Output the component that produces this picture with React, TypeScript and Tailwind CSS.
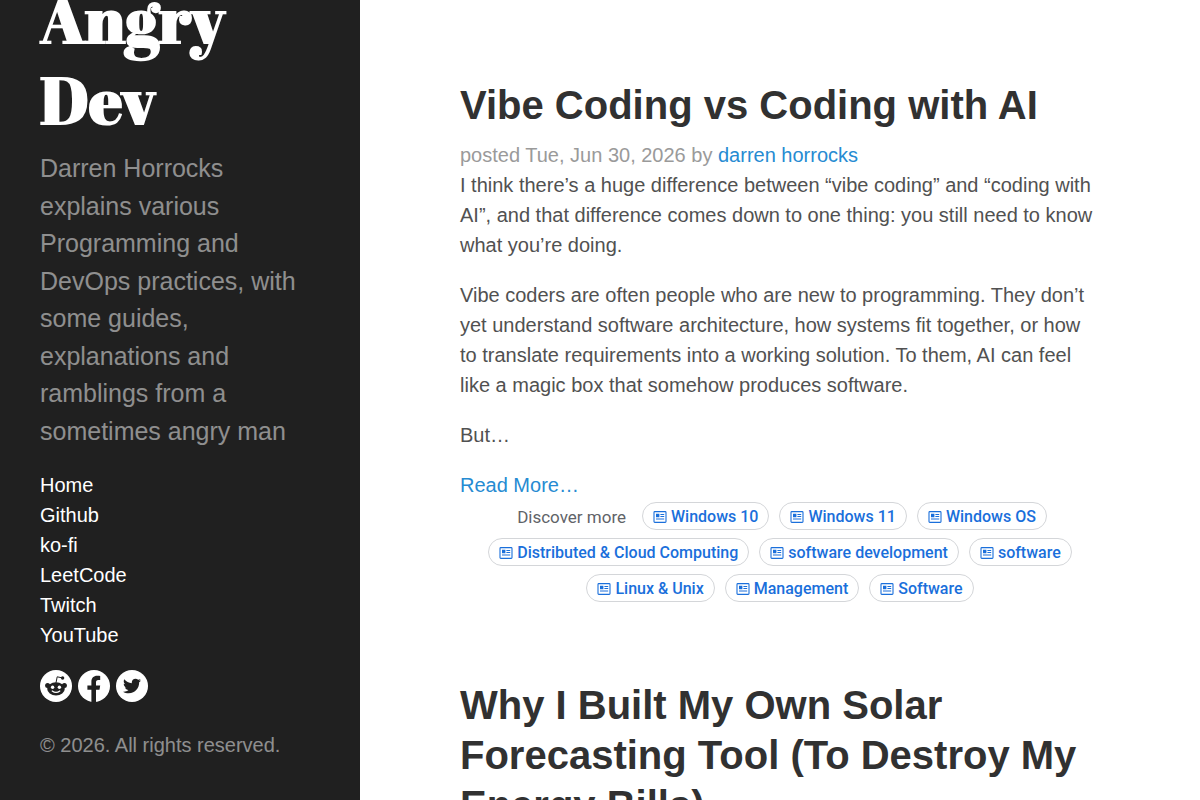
import { FaTwitter } from "react-icons/fa";

const links = ["Home", "Github", "ko-fi", "LeetCode", "Twitch", "YouTube"];

const topics = [
  "Windows 10",
  "Windows 11",
  "Windows OS",
  "Distributed & Cloud Computing",
  "software development",
  "software",
  "Linux & Unix",
  "Management",
  "Software",
];

function ArticleIcon() {
  return (
    <svg viewBox="0 0 14 12" className="h-3 w-3.5 shrink-0" fill="none" aria-hidden="true">
      <rect x="1" y="0.6" width="12" height="10.8" rx="0.8" stroke="currentColor" strokeWidth="1.1" />
      <path fill="currentColor" d="M3 2.8h3.4v3.4H3zM7.4 2.9h3.8v1H7.4zM7.4 5h3.8v1H7.4zM3 7.4h8.2v1H3z" />
    </svg>
  );
}

function RedditIcon() {
  return (
    <svg viewBox="0 0 32 32" className="size-8" aria-hidden="true">
      <circle cx="16" cy="16" r="16" fill="#fff" />
      <g fill="#202020">
        <circle cx="7.6" cy="15.6" r="2.5" />
        <circle cx="24.4" cy="15.6" r="2.5" />
        <ellipse cx="16" cy="18.8" rx="8.8" ry="6.6" />
        <circle cx="22.6" cy="8" r="1.7" />
      </g>
      <path d="M16 12.8l1.2-6 4.6 1" fill="none" stroke="#202020" strokeWidth="1" strokeLinejoin="round" />
      <circle cx="12.6" cy="17.2" r="1.7" fill="#fff" />
      <circle cx="19.4" cy="17.2" r="1.7" fill="#fff" />
      <path d="M12.2 21q3.8 2.8 7.6 0" fill="none" stroke="#fff" strokeWidth="1.2" strokeLinecap="round" />
    </svg>
  );
}

function FacebookIcon() {
  return (
    <svg viewBox="0 0 32 32" className="size-8" aria-hidden="true">
      <circle cx="16" cy="16" r="16" fill="#fff" />
      <path
        fill="#202020"
        d="M13.4 32V19.8H9.4v-4.4h4V12c0-4 2.2-6.2 5.8-6.2 1.6 0 3 .2 3 .2v3.9h-1.9c-1.8 0-2.3 1.1-2.3 2.3v3.2h4.2l-.7 4.4h-3.5V32z"
      />
    </svg>
  );
}

function Sidebar() {
  return (
    <aside className="sticky top-0 flex h-screen w-90 shrink-0 flex-col justify-end overflow-hidden bg-[#202020] p-10 text-white/50">
      <h1 className="mb-2.5 font-['Abril_Fatface','Liberation_Serif',serif] text-[65px] leading-tight font-bold text-white">
        <a href="#home">Angry Dev</a>
      </h1>
      <p className="mb-5 text-[25px] leading-normal">
        Darren Horrocks explains various Programming and DevOps practices, with some guides, explanations and ramblings
        from a sometimes angry man
      </p>
      <nav className="mb-5 flex flex-col text-white">
        {links.map((name) => (
          <a key={name} href={"#" + name.toLowerCase()}>
            {name}
          </a>
        ))}
      </nav>
      <div className="mb-7 flex gap-1.5 text-white">
        <a href="#reddit" aria-label="Reddit">
          <RedditIcon />
        </a>
        <a href="#facebook" aria-label="Facebook">
          <FacebookIcon />
        </a>
        <a
          href="#twitter"
          aria-label="Twitter"
          className="flex size-8 items-center justify-center rounded-full bg-white text-[#202020]"
        >
          <FaTwitter size={18} />
        </a>
      </div>
      <p>© 2026. All rights reserved.</p>
    </aside>
  );
}

function DiscoverMore() {
  return (
    <div className="mt-0.5 flex flex-wrap items-center justify-center gap-x-2.5 gap-y-2 font-['Roboto',sans-serif] text-base leading-6">
      <span className="pt-0.5 pr-1.5 pl-1 text-[17px] text-[#5f6368]">Discover more</span>
      {topics.map((topic) => (
        <a
          key={topic}
          href="#discover"
          className="flex h-7 items-center gap-1 rounded-full border border-[#d4d6d9] px-2.5 pt-0.5 font-medium text-[#1a6fdb]"
        >
          <ArticleIcon />
          {topic}
        </a>
      ))}
    </div>
  );
}

export default function App() {
  return (
    <div className="flex min-h-screen bg-white font-['Liberation_Sans',sans-serif] text-xl leading-[30px] text-[#515151]">
      <Sidebar />
      <main className="h-screen min-w-0 flex-1 overflow-hidden px-25 pt-20">
        <article className="mb-[78px]">
          <h2 className="mb-2.5 text-[40px] leading-tight font-bold text-[#313131]">
            <a href="#vibe-coding">Vibe Coding vs Coding with AI</a>
          </h2>
          <p className="text-[#9a9a9a]">
            posted Tue, Jun 30, 2026 by{" "}
            <a href="#author" className="text-[#268bd2]">
              darren horrocks
            </a>
          </p>
          <p className="mb-5">
            I think there’s a huge difference between “vibe coding” and “coding with AI”, and that difference comes down
            to one thing: you still need to know what you’re doing.
          </p>
          <p className="mb-5">
            Vibe coders are often people who are new to programming. They don’t yet understand software architecture,
            how systems fit together, or how to translate requirements into a working solution. To them, AI can feel
            like a magic box that somehow produces software.
          </p>
          <p className="mb-5">But…</p>
          <a href="#vibe-coding" className="block text-[#268bd2]">
            Read More…
          </a>
          <DiscoverMore />
        </article>
        <article>
          <h2 className="text-[40px] leading-tight font-bold text-[#313131]">
            <a href="#solar">Why I Built My Own Solar Forecasting Tool (To Destroy My Energy Bills)</a>
          </h2>
        </article>
      </main>
    </div>
  );
}
